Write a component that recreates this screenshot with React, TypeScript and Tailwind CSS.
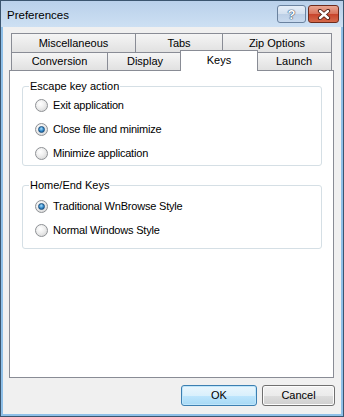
import React, { useState } from 'react';

// Win7 style "Preferences" dialog, Keys tab selected

const font = { fontFamily: '"Liberation Sans", Arial, sans-serif' };

const Radio = ({ label, checked, onClick }: { label: string; checked: boolean; onClick: () => void }) => (
  <div className="flex items-center h-6 cursor-default" onClick={onClick}>
    <span className="w-[13px] h-[13px] rounded-full border border-[#8e9195] bg-[radial-gradient(circle_at_40%_35%,#ffffff,#f0f0f0_40%,#cfcfcf)] flex items-center justify-center">
      {checked && (
        <span className="w-[7px] h-[7px] rounded-full border border-[#1d4f7c] bg-[radial-gradient(circle_at_45%_35%,#a6dcfa,#2f86c8_55%,#15528c)]" />
      )}
    </span>
    <span className="ml-[5px] text-[11px] tracking-[-0.2px] text-black">{label}</span>
  </div>
);

const GroupBox = ({ title, className, children }: { title: string; className?: string; children: React.ReactNode }) => (
  <fieldset className={`border border-[#d5dfe5] rounded-[3px] pl-[6px] w-[300px] ml-[12px] ${className ?? ''}`}>
    <legend className="px-[1px] text-[11px] leading-[14px] text-black">{title}</legend>
    <div className="ml-[6px]">{children}</div>
  </fieldset>
);

const Tab = ({ label, className }: { label: string; className: string }) => (
  <div className={`flex items-center justify-center border-t border-l border-[#898c95] bg-linear-to-b from-[#f5f5f5] to-[#e1e1e1] text-[11px] text-black ${className}`}>
    {label}
  </div>
);

const DialogButton = ({ label, primary, className }: { label: string; primary?: boolean; className: string }) => (
  <button
    className={`h-[21px] rounded-[3px] border text-[11px] text-black ${
      primary
        ? 'border-[#3c7fb1] bg-[linear-gradient(#eaf6fd,#d9f0fc_50%,#bee6fd_50%,#a7d9f5)] shadow-[inset_0_0_0_1px_#bfe6fb]'
        : 'border-[#707070] bg-[linear-gradient(#f2f2f2,#ebebeb_50%,#dddddd_50%,#cfcfcf)] shadow-[inset_0_0_0_1px_#fcfcfc]'
    } ${className}`}
  >
    {label}
  </button>
);

export default function App() {
  const [escape, setEscape] = useState('close');
  const [homeEnd, setHomeEnd] = useState('traditional');

  return (
    <div style={font} className="w-[344px] h-[417px] border border-[#3b556f] bg-[#8fc0e8] flex flex-col select-none">
      {/* title bar */}
      <div className="h-[26px] bg-linear-to-b from-[#b9d0ea] to-[#cde0f3] flex items-start justify-between">
        <span className="mt-[6px] ml-[6px] text-[11.5px] text-black">Preferences</span>
        <div className="flex mt-[4px] mr-[4px] gap-[2px]">
          <div className="w-[29px] h-[18px] rounded-[3px] border border-[#6a829f] bg-[linear-gradient(#e6eef8,#d3e0ef_50%,#bccfe6_50%,#c9daee)] flex items-center justify-center">
            <span className="text-[13px] font-bold leading-none text-white [text-shadow:0_0_1px_#2c4664,0_0_1px_#2c4664,0_0_1px_#2c4664]">?</span>
          </div>
          <div className="w-[31px] h-[18px] rounded-[3px] border border-[#6e2b1c] bg-[linear-gradient(#e9a792,#d8735b_50%,#c7432a_50%,#d56a4b)] flex items-center justify-center">
            <svg width="14" height="11" viewBox="0 0 14 11">
              <path d="M3 2 L11 9 M11 2 L3 9" stroke="#4a1d14" strokeWidth="4.2" strokeLinecap="round" />
              <path d="M3 2 L11 9 M11 2 L3 9" stroke="#ffffff" strokeWidth="2.4" strokeLinecap="round" />
            </svg>
          </div>
        </div>
      </div>

      {/* client area */}
      <div className="flex-1 mx-[2px] mb-[2px] bg-[#f0f0f0] flex flex-col pl-[6px] pt-[6px]">
        {/* tab rows */}
        <div className="flex h-[19px] ml-[2px]">
          <Tab label="Miscellaneous" className="w-[124px] pt-[1px]" />
          <Tab label="Tabs" className="w-[87px] pt-[1px]" />
          <Tab label="Zip Options" className="w-[110px] pt-[1px] border-r" />
        </div>
        <div className="flex h-[18px] ml-[2px] items-end">
          <Tab label="Conversion" className="w-[96px] h-[18px]" />
          <Tab label="Display" className="w-[75px] h-[18px]" />
          <div className="relative z-10 -ml-[2px] -mb-px w-[78px] h-[21px] border-t border-l border-r border-[#898c95] bg-white flex items-center justify-center text-[11px] text-black pb-[2px]">
            Keys
          </div>
          <Tab label="Launch" className="-ml-[2px] w-[76px] h-[18px] border-r" />
        </div>

        {/* tab page */}
        <div className="w-[325px] h-[308px] border border-[#898c95] bg-white pt-[8px]">
          <GroupBox title="Escape key action">
            <Radio label="Exit application" checked={escape === 'exit'} onClick={() => setEscape('exit')} />
            <Radio label="Close file and minimize" checked={escape === 'close'} onClick={() => setEscape('close')} />
            <Radio label="Minimize application" checked={escape === 'min'} onClick={() => setEscape('min')} />
          </GroupBox>
          <GroupBox title="Home/End Keys" className="mt-[12px]">
            <div className="pt-[2px] pb-[6px]">
              <Radio label="Traditional WnBrowse Style" checked={homeEnd === 'traditional'} onClick={() => setHomeEnd('traditional')} />
              <Radio label="Normal Windows Style" checked={homeEnd === 'normal'} onClick={() => setHomeEnd('normal')} />
            </div>
          </GroupBox>
        </div>

        {/* buttons */}
        <div className="flex justify-end gap-[5px] mt-[7px] pr-[6px]">
          <DialogButton label="OK" primary className="w-[76px]" />
          <DialogButton label="Cancel" className="w-[73px]" />
        </div>
      </div>
    </div>
  );
}
